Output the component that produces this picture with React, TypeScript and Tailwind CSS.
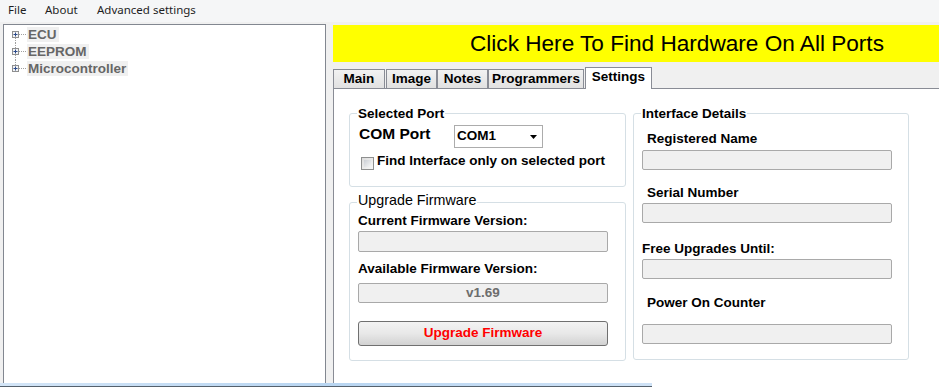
import React from "react";

function TreeIcon({ up, down }: { up: boolean; down: boolean }) {
  return (
    <svg width="23" height="17" viewBox="0 0 23 17" className="shrink-0">
      {up && <line x1="11.5" y1="0" x2="11.5" y2="5" stroke="#a0a0a0" strokeDasharray="1 1" />}
      {down && <line x1="11.5" y1="12" x2="11.5" y2="17" stroke="#a0a0a0" strokeDasharray="1 1" />}
      <line x1="15" y1="8.5" x2="22" y2="8.5" stroke="#a0a0a0" strokeDasharray="1 1" />
      <rect x="8.5" y="5.5" width="6" height="6" fill="#f4f4f4" stroke="#8f8f8f" />
      <line x1="9.5" y1="8.5" x2="13.5" y2="8.5" stroke="#2b4a8a" />
      <line x1="11.5" y1="6.5" x2="11.5" y2="10.5" stroke="#2b4a8a" />
    </svg>
  );
}

function Tree() {
  const items = ["ECU", "EEPROM", "Microcontroller"];
  return (
    <div className="mt-[2px] w-[323px] h-[380px] border border-[#828790] bg-white pt-[1px]">
      {items.map((t, i) => (
        <div key={t} className="flex items-center h-[17px]">
          <TreeIcon up={i > 0} down={i < items.length - 1} />
          <span className="bg-[#f0f0f0] pl-[1px] pr-[2px] text-[13.5px] leading-[15px] font-bold text-[#666666]">
            {t}
          </span>
        </div>
      ))}
    </div>
  );
}

function Group({
  title,
  titleClass,
  titleTop,
  className,
  children,
}: {
  title: string;
  titleClass: string;
  titleTop: string;
  className: string;
  children: React.ReactNode;
}) {
  return (
    <div className={"relative border border-[#d5dfe5] rounded-[3px] " + className}>
      <span className={"absolute left-[7px] px-[1px] bg-white " + titleTop + " " + titleClass}>{title}</span>
      {children}
    </div>
  );
}

function ReadBox({ className, children }: { className: string; children?: React.ReactNode }) {
  return (
    <div
      className={
        "w-[250px] bg-[#f0f0f0] border border-[#a9a9a9] rounded-[2px] flex items-center justify-center text-[13.5px] font-bold text-[#6d6d6d] " +
        className
      }
    >
      {children}
    </div>
  );
}

function Label({ className, children }: { className: string; children: React.ReactNode }) {
  return <div className={"text-[13.5px] leading-[15px] font-bold text-black " + className}>{children}</div>;
}

function Tab({ label, className, selected }: { label: string; className: string; selected?: boolean }) {
  return (
    <div
      className={
        "flex justify-center items-start text-[13.5px] leading-[18px] font-bold text-black border-t border-l border-r border-[#898c95] " +
        (selected
          ? "relative z-10 h-[22px] -mb-[1px] bg-white"
          : "h-[19px] bg-linear-to-b from-[#f2f2f2] to-[#e1e1e1] ") +
        " " +
        className
      }
    >
      {label}
    </div>
  );
}

function RightPanel() {
  return (
    <div className="w-[606px] flex flex-col">
      <div className="mt-[3px] h-[37px] bg-[#ffff00] flex items-center pl-[137px] text-[22.6px] leading-[26px] text-black whitespace-nowrap">
        Click Here To Find Hardware On All Ports
      </div>
      <div className="h-[26px] flex items-end">
        <Tab label="Main" className="w-[52px]" />
        <Tab label="Image" className="ml-[1px] w-[51px]" />
        <Tab label="Notes" className="w-[51px]" />
        <Tab label="Programmers" className="w-[96px]" />
        <Tab label="Settings" className="ml-[1px] w-[67px]" selected />
      </div>
      <div className="flex-1 bg-white border-t border-l border-[#898c95] pl-[15px] pt-[24px]">
        <div className="flex gap-[7px]">
          <div className="w-[277px] flex flex-col">
            <Group
              title="Selected Port"
              titleTop="-top-[8px]"
              titleClass="text-[13.5px] leading-[15px] font-bold"
              className="h-[74px] pl-[8px]"
            >
              <div className="mt-[11px] flex items-start h-[23px]">
                <span className="w-[96px] pl-[1px] text-[15.5px] leading-[17px] font-bold">COM Port</span>
                <div className="w-[89px] h-[23px] border border-[#acacac] bg-white flex items-center pl-[2px] pr-[5px]">
                  <span className="text-[13.5px] font-bold">COM1</span>
                  <svg width="7" height="4" viewBox="0 0 7 4" className="ml-auto mt-[1px]">
                    <polygon points="0,0 7,0 3.5,4" fill="#000" />
                  </svg>
                </div>
              </div>
              <div className="mt-[5px] flex items-start">
                <div className="ml-[3px] mt-[4px] w-[13px] h-[13px] border border-[#8e8f8f] bg-linear-to-br from-[#dcdcdc] to-[#f8f8f8] p-[2px]">
                  <div className="w-full h-full bg-linear-to-br from-[#cbcfd5] to-[#f6f6f6]" />
                </div>
                <span className="ml-[3px] text-[13.5px] leading-[15px] font-bold whitespace-nowrap">
                  Find Interface only on selected port
                </span>
              </div>
            </Group>
            <Group
              title="Upgrade Firmware"
              titleTop="-top-[11px]"
              titleClass="text-[14.3px] leading-[16px] font-normal"
              className="mt-[15px] h-[159px] pl-[8px]"
            >
              <Label className="mt-[10px]">Current Firmware Version:</Label>
              <ReadBox className="mt-[3px] h-[21px]" />
              <Label className="mt-[9px]">Available Firmware Version:</Label>
              <ReadBox className="mt-[7px] h-[20px]">v1.69</ReadBox>
              <button className="mt-[18px] w-[250px] h-[25px] rounded-[3px] border border-[#707070] bg-linear-to-b from-[#f3f3f3] via-[#e8e8e8] to-[#d2d2d2] text-[13.5px] font-bold text-[#ff0000] flex items-center justify-center">
                Upgrade Firmware
              </button>
            </Group>
          </div>
          <div className="w-[276px]">
            <Group
              title="Interface Details"
              titleTop="-top-[8px]"
              titleClass="text-[13.5px] leading-[15px] font-bold"
              className="h-[247px] pl-[8px]"
            >
              <Label className="mt-[17px] ml-[5px]">Registered Name</Label>
              <ReadBox className="mt-[4px] h-[20px]" />
              <Label className="mt-[15px] ml-[5px]">Serial Number</Label>
              <ReadBox className="mt-[3px] h-[20px]" />
              <Label className="mt-[18px]">Free Upgrades Until:</Label>
              <ReadBox className="mt-[3px] h-[20px]" />
              <Label className="mt-[16px] ml-[5px]">Power On Counter</Label>
              <ReadBox className="mt-[14px] h-[20px]" />
            </Group>
          </div>
        </div>
      </div>
    </div>
  );
}

export default function App() {
  return (
    <div className="relative w-[939px] h-[387px] overflow-hidden bg-[#f0f0f0] font-['Liberation_Sans',Arial,sans-serif] text-black">
      <div className="h-[22px] flex items-start pt-[2px] bg-[#f5f6f7] font-['Noto_Sans',sans-serif] text-[11.5px] leading-[16px] text-[#1e1e1e]">
        <span className="ml-[8px] w-[37px]">File</span>
        <span className="w-[52px]">About</span>
        <span>Advanced settings</span>
      </div>
      <div className="flex h-[365px]">
        <div className="w-[3px] shrink-0" />
        <Tree />
        <div className="w-[7px] shrink-0" />
        <RightPanel />
      </div>
      <div className="absolute left-0 bottom-0 w-[652px] h-[4px] flex flex-col">
        <div className="h-[3px] bg-linear-to-r from-[#d3e5f7] via-[#b8d5f1] to-[#cfe2f6]" />
        <div className="h-[1px] bg-[#55616d]" />
      </div>
    </div>
  );
}
